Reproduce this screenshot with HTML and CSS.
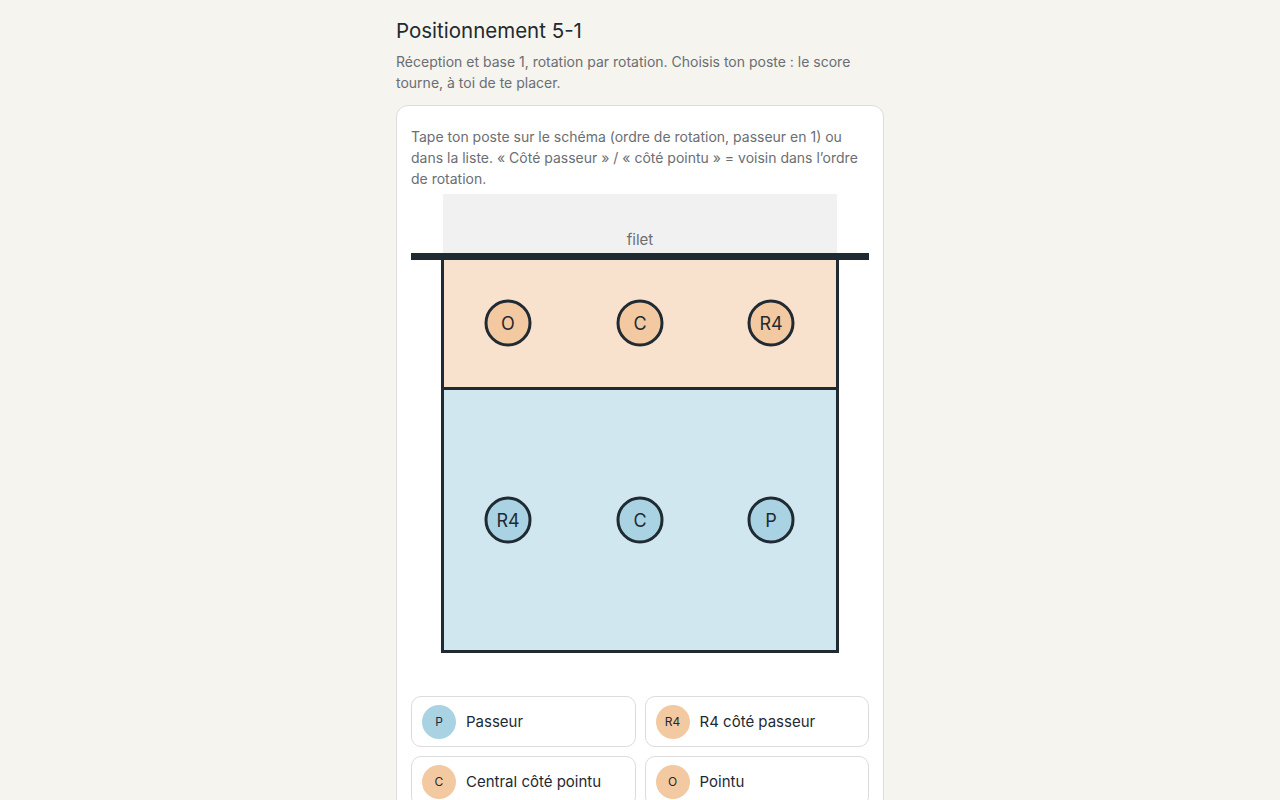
FILE: index.html
```html
<!DOCTYPE html>
<html lang="fr">
<head>
<meta charset="utf-8">
<title>Positionnement 5-1</title>
<link rel="stylesheet" href="styles.css">
</head>
<body>
<main class="page">
  <h1 class="title">Positionnement 5-1</h1>
  <p class="subtitle">Réception et base 1, rotation par rotation. Choisis ton poste : le score tourne, à toi de te placer.</p>
  <section class="card">
    <p class="hint">Tape ton poste sur le schéma (ordre de rotation, passeur en 1) ou dans la liste. « Côté passeur » / « côté pointu » = voisin dans l’ordre de rotation.</p>
    <svg class="court" viewBox="0 0 458 470" width="458" height="470">
      <rect x="32" y="0" width="394" height="61" fill="#f1f1f1"/>
      <text x="229" y="51" text-anchor="middle" class="net-label">filet</text>
      <rect x="31.5" y="64.5" width="395" height="130" fill="#f8e1cd"/>
      <rect x="31.5" y="194.5" width="395" height="263" fill="#d1e7ef"/>
      <rect x="31.5" y="64.5" width="395" height="393" fill="none" stroke="#1f2a33" stroke-width="3"/>
      <line x1="31" y1="194.5" x2="427" y2="194.5" stroke="#1f2a33" stroke-width="3"/>
      <rect x="0" y="59" width="458" height="7" fill="#1f2a33"/>
      <g class="player front">
        <circle cx="97" cy="129" r="22"/><text x="97" y="135.5">O</text>
        <circle cx="229" cy="129" r="22"/><text x="229" y="135.5">C</text>
        <circle cx="360" cy="129" r="22"/><text x="360" y="135.5">R4</text>
      </g>
      <g class="player back">
        <circle cx="97" cy="326" r="22"/><text x="97" y="332.5">R4</text>
        <circle cx="229" cy="326" r="22"/><text x="229" y="332.5">C</text>
        <circle cx="360" cy="326" r="22"/><text x="360" y="332.5">P</text>
      </g>
    </svg>
    <div class="roles">
      <button class="role"><span class="badge blue">P</span><span>Passeur</span></button>
      <button class="role"><span class="badge peach">R4</span><span>R4 côté passeur</span></button>
      <button class="role"><span class="badge peach">C</span><span>Central côté pointu</span></button>
      <button class="role"><span class="badge peach">O</span><span>Pointu</span></button>
    </div>
  </section>
</main>
</body>
</html>
```
FILE: styles.css
```css
* { box-sizing: border-box; }
html, body { margin: 0; padding: 0; }
body {
  background: #f5f4ef;
  font-family: Inter, "Noto Sans", "Liberation Sans", sans-serif;
  color: #1f2933;
}
.page {
  width: 488px;
  margin: 0 auto;
  padding-top: 17px;
}
.title {
  margin: 0;
  font-size: 20.5px;
  font-weight: 400;
  line-height: 28px;
  color: #222a30;
}
.subtitle {
  margin: 6px 0 0;
  font-size: 14px;
  line-height: 21px;
  color: #6b6e72;
}
.card {
  margin-top: 12px;
  background: #fff;
  border: 1px solid #dedcd6;
  border-radius: 12px;
  padding: 20px 14px 14px;
}
.hint {
  margin: 0;
  font-size: 14px;
  line-height: 21px;
  color: #6b6e72;
}
.court {
  display: block;
  margin-top: 5px;
}
.net-label {
  font-family: Inter, "Noto Sans", "Liberation Sans", sans-serif;
  font-size: 15px;
  fill: #6b6e72;
}
.player circle { stroke: #1f2a33; stroke-width: 3; }
.player.front circle { fill: #f3c9a1; }
.player.back circle { fill: #a9d3e3; }
.player text {
  font-family: Inter, "Noto Sans", "Liberation Sans", sans-serif;
  font-size: 18px;
  text-anchor: middle;
  fill: #1f2a33;
}
.roles {
  margin-top: 32px;
  display: grid;
  grid-template-columns: 1fr 1fr;
  gap: 9px 9px;
}
.role {
  display: flex;
  align-items: center;
  gap: 10px;
  height: 51px;
  padding: 0 10px;
  background: #fff;
  border: 1px solid #dcdcdc;
  border-radius: 10px;
  font-family: inherit;
  font-size: 15px;
  color: #1f2933;
  text-align: left;
  cursor: pointer;
}
.badge {
  width: 34px;
  height: 34px;
  border-radius: 50%;
  display: flex;
  align-items: center;
  justify-content: center;
  font-size: 12px;
  color: #1f2a33;
  flex: none;
}
.badge.blue { background: #a9d3e3; }
.badge.peach { background: #f3c9a1; }
```
